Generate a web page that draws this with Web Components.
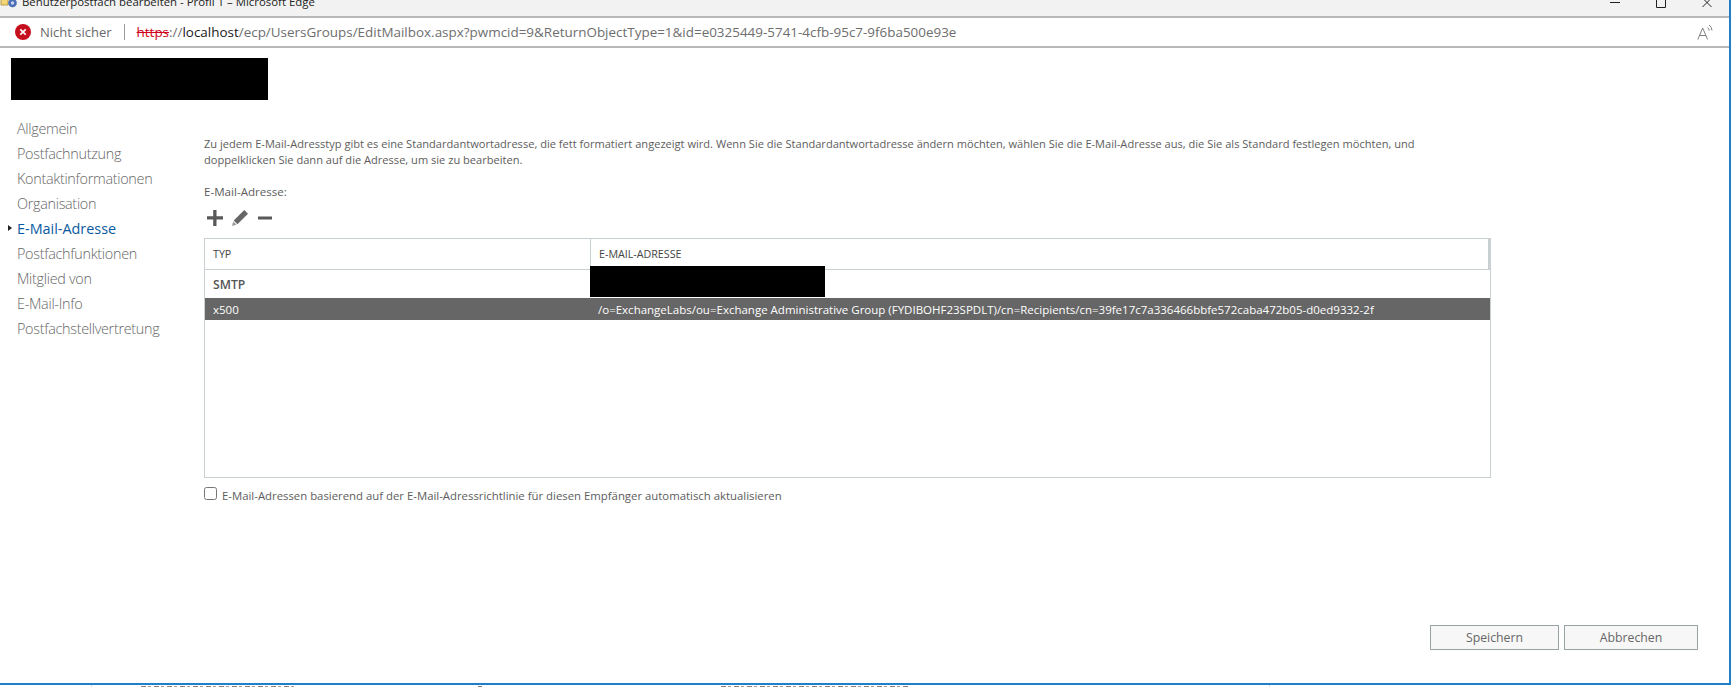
<!DOCTYPE html>
<html lang="de"><head><meta charset="utf-8"><title>Benutzerpostfach bearbeiten</title>
<style>
html,body{margin:0;padding:0;height:100%;overflow:hidden;background:#fff}
body{font-family:"Open Sans","Noto Sans",sans-serif}
</style></head><body>
<app-window>
  <title-bar slot="chrome" caption="Benutzerpostfach bearbeiten - Profil 1 – Microsoft Edge"></title-bar>
  <address-bar slot="chrome"></address-bar>
  <redact-box></redact-box>
  <edit-body>
    <side-nav slot="nav">
      <nav-item>Allgemein</nav-item>
      <nav-item>Postfachnutzung</nav-item>
      <nav-item>Kontaktinformationen</nav-item>
      <nav-item>Organisation</nav-item>
      <nav-item active>E-Mail-Adresse</nav-item>
      <nav-item>Postfachfunktionen</nav-item>
      <nav-item>Mitglied von</nav-item>
      <nav-item>E-Mail-Info</nav-item>
      <nav-item>Postfachstellvertretung</nav-item>
    </side-nav>
    <address-panel></address-panel>
  </edit-body>
  <form-actions></form-actions>
</app-window>
<script>
const def=(n,css,html,init)=>customElements.define(n,class extends HTMLElement{
  connectedCallback(){ if(this.shadowRoot) return; const r=this.attachShadow({mode:'open'}); r.innerHTML='<style>'+css+'</style>'+(typeof html==='function'?html(this):html); if(init) init(r,this);}
});
def('app-window',`:host{display:flex;flex-direction:column;box-sizing:border-box;width:1731px;height:687px;overflow:hidden;background:#fff}
 .frame{display:flex;flex-direction:column;min-height:0;border-right:2px solid #1f7fc8;border-bottom:2px solid #1f7fc8;height:685px;box-sizing:border-box;flex:none}
 .page{flex:1;display:flex;flex-direction:column;min-height:0}
 .under{height:2px;display:flex;align-items:flex-end}
 .under i{display:block;height:1px;flex:none;background:repeating-linear-gradient(90deg,#8a8078 0 5px,transparent 5px 7px,#a89c90 7px 10px,transparent 10px 13px)}
 .under u{display:block;height:2px;width:1px;background:#ddd;flex:none}`,
 `<div class="frame"><slot name="chrome"></slot><div class="page"><slot></slot></div></div>
 <div class="under"><u style="margin-left:91px"></u><i style="margin-left:49px;width:155px"></i><i style="margin-left:182px;width:4px"></i><i style="margin-left:239px;width:188px"></i><u style="margin-left:360px"></u></div>`);
def('title-bar',`:host{display:flex;box-sizing:border-box;height:18px;background:#f2f2f2;border-bottom:2px solid #b8b8b8;overflow:hidden;align-items:flex-end;justify-content:space-between;padding:0 0 1px 0;color:#222}
 .l{display:flex;align-items:center;height:22px;gap:5px;margin-bottom:2px}
 svg{display:block;flex:none}
 .cap{font-size:11.4px;line-height:22px;white-space:nowrap}
 .w{display:flex;align-items:flex-start;height:15px;padding-right:17px;gap:36px}
 .w svg{width:10px;height:14px}`,
 h=>`<div class="l"><svg width="17" height="16" viewBox="0 0 17 16"><path d="M1 4h7v7H1z" fill="#f2d678" stroke="#b08a30" stroke-width=".8"/><circle cx="12.500" cy="9" r="4.300" fill="#4a6fb5"/><circle cx="12.500" cy="9" r="1.700" fill="#c9d6ef"/></svg><span class="cap">${h.getAttribute('caption')}</span></div>
 <div class="w"><svg viewBox="0 0 10 14"><path d="M0 2.500h10" stroke="#222" stroke-width="1"/></svg><svg viewBox="0 0 10 14"><path d="M.5-2h9v9.500h-9z" fill="none" stroke="#222"/></svg><svg viewBox="0 0 10 14"><path d="M.5-2l9 9M9.500-2l-9 9" fill="none" stroke="#222"/></svg></div>`);
def('address-bar',`:host{display:flex;align-items:center;box-sizing:border-box;height:30px;border-bottom:2px solid #b8b8b8;background:#fff;font-size:13.450px;white-space:nowrap;color:#6e6e6e}
 .err{margin-left:15px;flex:none}
 .ns{margin-left:9px;color:#6a6a6a;font-size:13px}
 .sep{width:1px;height:16px;background:#999;margin:0 12px 0 12px;flex:none}
 s{color:#d0021b;text-decoration-color:#d0021b}
 b{font-weight:400;color:#1a1a1a}
 .url{flex:1}
 .rd{margin-right:16px;flex:none}`,
 `<svg class="err" width="16" height="16" viewBox="0 0 16 16"><circle cx="8" cy="8" r="8" fill="#c50f1f"/><path d="M5.300 5.300l5.400 5.400M10.700 5.300l-5.400 5.400" stroke="#fff" stroke-width="1.700"/></svg><span class="ns">Nicht sicher</span><span class="sep"></span><span class="url"><s>https</s>://<b>localhost</b>/ecp/UsersGroups/EditMailbox.aspx?pwmcid=9&amp;ReturnObjectType=1&amp;id=e0325449-5741-4cfb-95c7-9f6ba500e93e</span>
 <svg class="rd" width="16" height="16" viewBox="0 0 16 16" fill="none" stroke="#808080" stroke-width="1"><path d="M.8 15.500L5.700 4l4.900 11.500M2.400 11.500h6.600"/><path d="M10.500 3.500a4 4 0 0 1 1.800 3.200M12 1a6.500 6.500 0 0 1 3 5.500"/></svg>`);
def('redact-box',`:host{display:block;width:257px;height:42px;background:#000;margin:10px 0 0 11px;flex:none}`,``);
def('edit-body',`:host{display:flex;margin-top:16px;flex:none}
 ::slotted([slot=nav]){flex:none}`,`<slot name="nav"></slot><slot></slot>`);
def('side-nav',`:host{display:flex;flex-direction:column;width:204px;box-sizing:border-box;padding-left:17px}`,`<slot></slot>`);
def('nav-item',`:host{display:block;position:relative;height:25px;line-height:25px;font-size:14.400px;font-weight:300;letter-spacing:-.3px;color:#666;white-space:nowrap}
 :host([active]){color:#0a5aa0;font-weight:400;letter-spacing:0}
 :host([active])::before{content:"";position:absolute;left:-9px;top:9px;border-left:4px solid #222;border-top:3.500px solid transparent;border-bottom:3.500px solid transparent}`,`<slot></slot>`);
def('icon-bar',`:host{display:flex;align-items:center;height:24px;padding-left:3px}svg{display:block;flex:none}`,
 `<svg width="16" height="16" viewBox="0 0 16 16"><path d="M6.200 0h3.300v6.300H16v3.300H9.500V16H6.200V9.600H0V6.300h6.200z" fill="#595959"/></svg>
 <svg style="margin-left:9px" width="16" height="16" viewBox="0 0 16 16"><path d="M12.300 0L16 3.700 5.400 14.300 1.700 10.600z" fill="#666"/><path d="M1.200 11.500l3.300 3.300L0 16z" fill="#9a9a9a"/></svg>
 <svg style="margin-left:10px" width="14" height="16" viewBox="0 0 14 16"><path d="M0 6.500h14v3H0z" fill="#595959"/></svg>`);
def('address-panel',`:host{display:flex;flex-direction:column;flex:none;width:1287px;font-size:11.200px;color:#5d5d5d;padding-top:20px}
 p{margin:0;line-height:16px;width:1270px;font-size:11.080px}
 .lbl{margin-top:16px;line-height:16px;font-size:11.600px}
 icon-bar{margin-top:6px}
 .tbl{box-sizing:border-box;height:240px;margin-top:8px;border:1px solid #c8d0d4;display:grid;grid-template-columns:385px 1fr;grid-template-rows:31px 28px 22px 1fr;position:relative}
 .h{display:flex;align-items:center;padding-left:8px;font-size:10.700px;border-bottom:1px solid #c8d0d4;color:#444}
 .h+.h{border-left:1px solid #c8d0d4;border-right:2px solid #c8d0d4}
 .c{display:flex;align-items:flex-end;padding:0 0 0 8px;white-space:nowrap;font-size:11.500px}
 .smtp{font-weight:600;color:#555;padding-bottom:5px;font-size:12.200px}
 .sel{background:#666;color:#fff;align-items:center}
 .blk{background:#000;position:absolute;left:385px;top:27px;width:235px;height:31px}
 label{display:flex;align-items:center;margin-top:9px;height:16px;white-space:nowrap;font-size:11.360px}
 .cb{box-sizing:border-box;width:13px;height:13px;border:1px solid #767676;border-radius:2.500px;margin:0 5px 3px 0;background:#fff;flex:none}`,
 `<p>Zu jedem E-Mail-Adresstyp gibt es eine Standardantwortadresse, die fett formatiert angezeigt wird. Wenn Sie die Standardantwortadresse ändern möchten, wählen Sie die E-Mail-Adresse aus, die Sie als Standard festlegen möchten, und doppelklicken Sie dann auf die Adresse, um sie zu bearbeiten.</p>
 <div class="lbl">E-Mail-Adresse:</div>
 <icon-bar></icon-bar>
 <div class="tbl"><div class="h">TYP</div><div class="h">E-MAIL-ADRESSE</div>
 <div class="c smtp">SMTP</div><div class="c"></div>
 <div class="c sel">x500</div><div class="c sel">/o=ExchangeLabs/ou=Exchange Administrative Group (FYDIBOHF23SPDLT)/cn=Recipients/cn=39fe17c7a336466bbfe572caba472b05-d0ed9332-2f</div>
 <div class="blk"></div></div>
 <label><span class="cb"></span>E-Mail-Adressen basierend auf der E-Mail-Adressrichtlinie für diesen Empfänger automatisch aktualisieren</label>`);
def('form-actions',`:host{display:flex;justify-content:flex-end;gap:5px;margin-top:auto;padding:0 31px 33px 0;flex:none}
 button{box-sizing:border-box;height:25px;border:1px solid #98a3a6;background:#f7f7f7;color:#666;font:12.300px "Open Sans",sans-serif;padding:0}
 .a{width:129px}.b{width:134px}`,`<button class="a">Speichern</button><button class="b">Abbrechen</button>`);
</script>
</body></html>
